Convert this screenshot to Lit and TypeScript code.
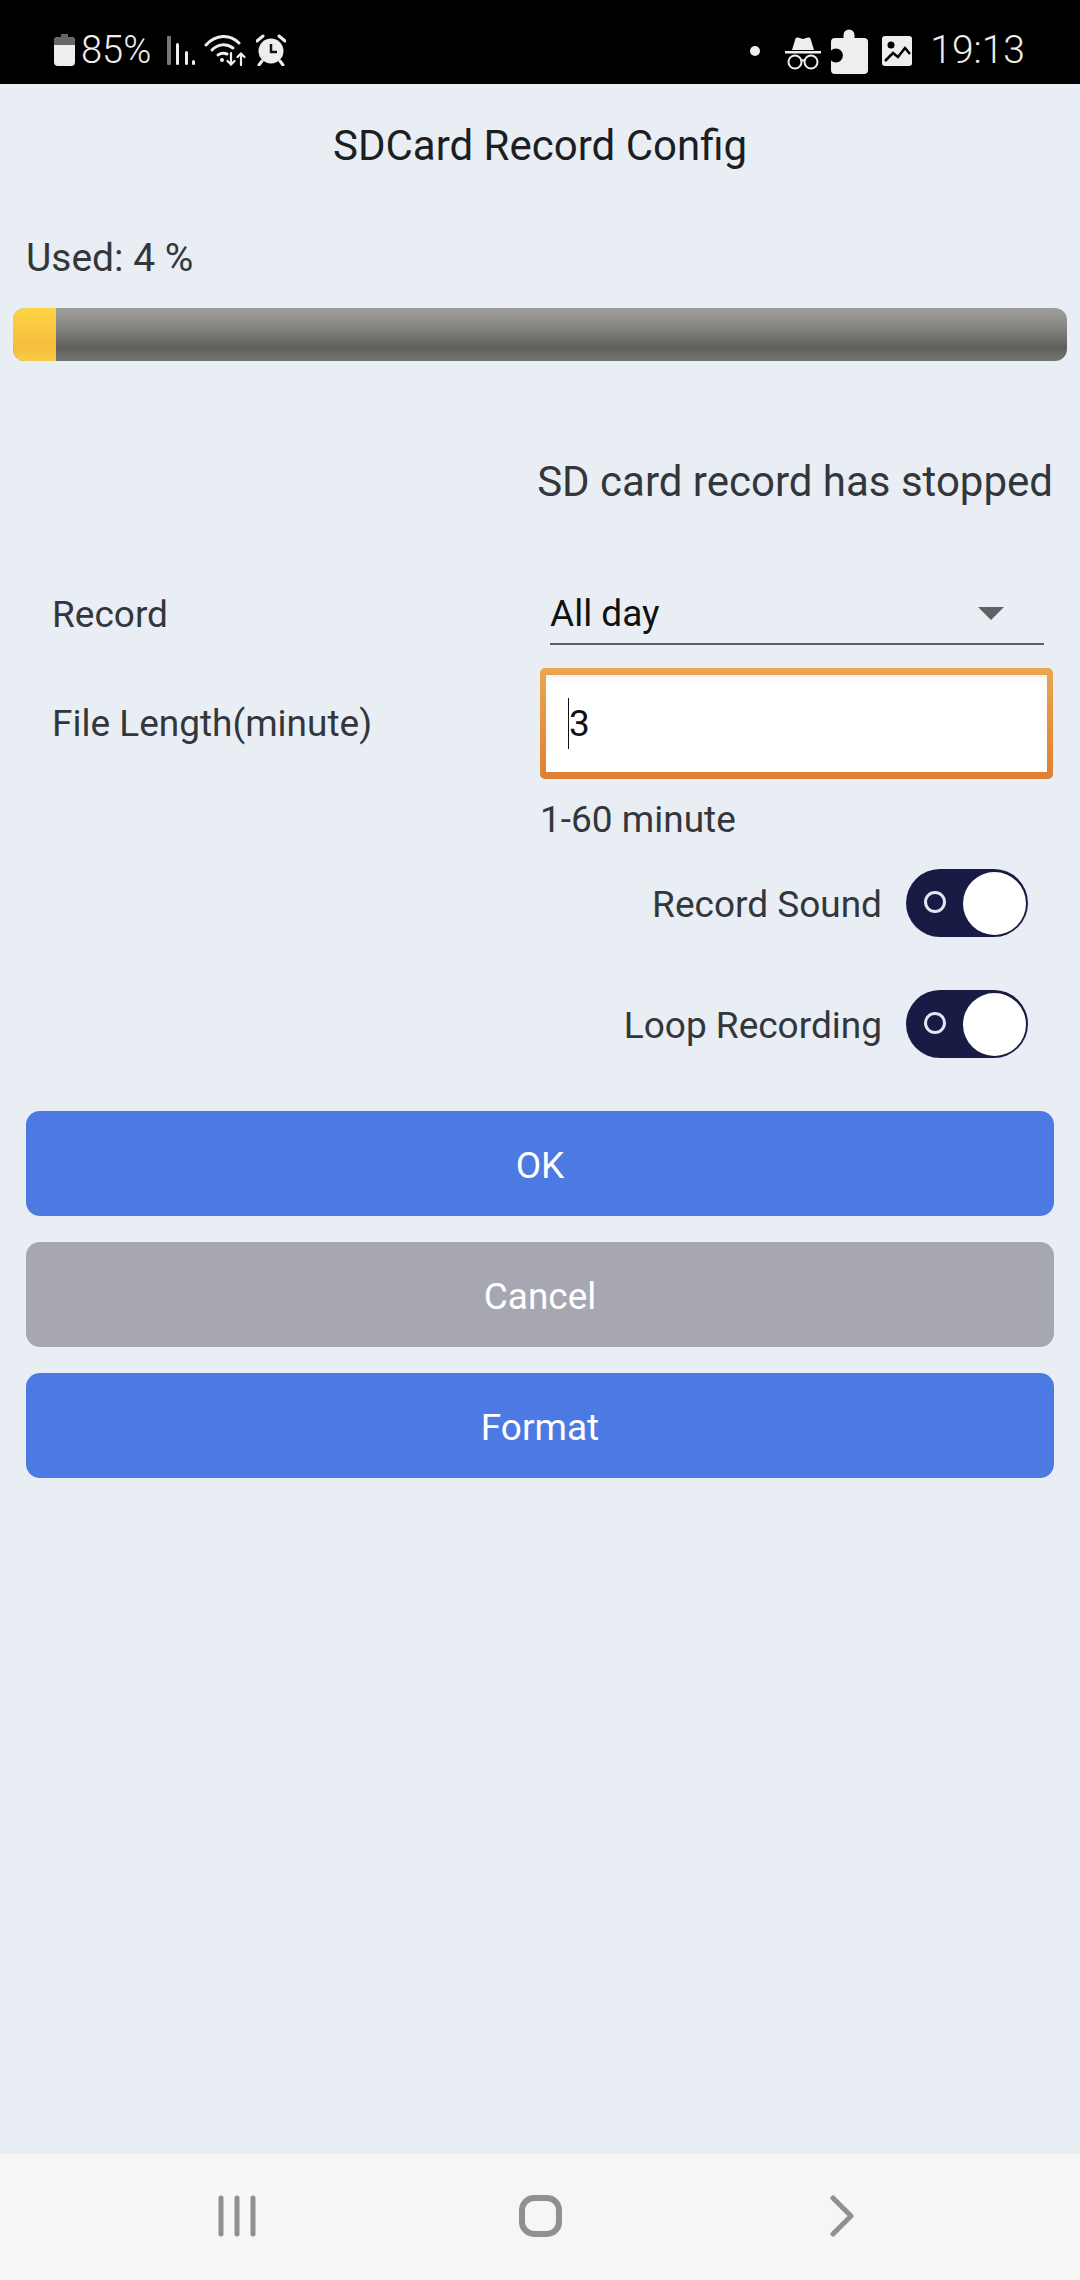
import { LitElement, html, css } from "lit";
import { customElement } from "lit/decorators.js";

@customElement("app-root")
export class AppRoot extends LitElement {
  static styles = css`
    :host { display: flex; flex-direction: column; width: 1080px; height: 2280px; background: #e9eef5; font-family: Roboto, "Liberation Sans", sans-serif; color: #33373b; overflow: hidden; }
    .status { height: 84px; box-sizing: border-box; background: #000; color: #eee; display: flex; align-items: center; padding: 16px 55px 0 54px; font-size: 38px; flex: none; }
    .status svg { display: block; flex: none; }
    .status .pct { margin-left: 6px; font-weight: 300; }
    .status .time { margin-left: 18px; font-size: 39px; font-weight: 300; }
    .status .spacer { flex: 1; }
    .main { flex: 1; display: flex; flex-direction: column; }
    .title { height: 122px; display: flex; align-items: center; justify-content: center; font-size: 42px; color: #1c1f22; flex: none; }
    .used { height: 102px; box-sizing: border-box; display: flex; align-items: center; padding: 2px 0 0 26px; font-size: 39px; flex: none; }
    .bar { height: 53px; margin: 0 13px; border-radius: 12px; overflow: hidden; background: linear-gradient(#a19f9e, #868684 35%, #5f605c 75%, #747470); flex: none; }
    .fill { height: 100%; width: 43px; background: linear-gradient(#fcd545, #f7bd3b 75%, #f9cb4a); }
    .state { margin-top: 90px; height: 60px; display: flex; align-items: center; justify-content: flex-end; padding-right: 27px; font-size: 42px; flex: none; }
    .form { margin-top: 78px; display: grid; grid-template-columns: 488px 513px; padding-left: 52px; font-size: 37px; row-gap: 23px; flex: none; }
    .lab { display: flex; align-items: center; }
    .lab.r1 { height: 56px; padding-bottom: 6px; box-sizing: border-box; }
    .select { height: 56px; margin: 0 9px 0 10px; box-sizing: border-box; border-bottom: 2px solid #5c6066; display: flex; align-items: center; justify-content: space-between; color: #111; padding: 0 40px 6px 0; }
    .arrow { width: 0; height: 0; border-left: 13px solid transparent; border-right: 13px solid transparent; border-top: 13px solid #5f6064; }
    .inputwrap { height: 111px; padding: 7px 6px; box-sizing: border-box; border-radius: 5px; background: linear-gradient(#eaa650, #df7f34); display: flex; }
    .input { flex: 1; background: #fff; box-shadow: inset 0 6px 8px -6px #ddd; display: flex; align-items: center; padding-left: 22px; color: #111; }
    .caret { width: 1px; height: 51px; background: #111; }
    .hint { height: 40px; margin-top: 20px; display: flex; align-items: center; font-size: 37px; flex: none; padding-left: 540px; }
    .switch { display: flex; align-items: center; justify-content: flex-end; padding-right: 52px; gap: 24px; height: 68px; font-size: 37px; flex: none; }
    .switch span { padding-top: 2px; }
    .sw1 { margin-top: 30px; }
    .sw2 { margin-top: 53px; }
    .toggle { width: 122px; height: 68px; box-sizing: border-box; border-radius: 34px; background: #181c45; display: flex; align-items: center; justify-content: space-between; padding: 0 2px 0 18px; }
    .ring { width: 22px; height: 22px; box-sizing: border-box; border: 3px solid #e4e6f0; border-radius: 50%; margin-top: -2px; }
    .knob { width: 63px; height: 63px; border-radius: 50%; background: #fff; }
    .btns { margin-top: 53px; padding: 0 26px; display: flex; flex-direction: column; gap: 26px; }
    .btn { height: 105px; box-sizing: border-box; padding-top: 3px; border-radius: 14px; background: #4d79e3; color: #fff; display: flex; align-items: center; justify-content: center; font-size: 37px; }
    .btn.gray { background: #a6a7b0; }
    .nav { height: 126px; background: #f6f6f6; display: flex; align-items: center; gap: 261px; padding: 0 0 2px 216px; box-sizing: border-box; flex: none; }
    .nav svg { display: block; }
    .nav .chev { margin-left: 6px; }
  `;

  private toggleRow(label: string, cls: string) {
    return html`<div class="switch ${cls}"><span>${label}</span><div class="toggle"><div class="ring"></div><div class="knob"></div></div></div>`;
  }

  render() {
    return html`
      <div class="status">
        <svg width="21" height="32" viewBox="0 0 21 32"><path d="M7 0h7v3h3a4 4 0 0 1 4 4v21a4 4 0 0 1-4 4H4a4 4 0 0 1-4-4V7a4 4 0 0 1 4-4h3z" fill="#eee"/><path d="M7 0h7v3h3a4 4 0 0 1 4 4v4H0V7a4 4 0 0 1 4-4h3z" fill="#666"/></svg>
        <span class="pct">85%</span>
        <svg style="margin-left:16px" width="30" height="32" viewBox="0 0 30 32"><rect x="0" y="2" width="4" height="29" rx="1" fill="#777"/><rect x="9" y="9" width="3" height="22" rx="1.5" fill="#eee"/><rect x="18" y="17" width="3" height="14" rx="1.5" fill="#eee"/><rect x="25" y="26" width="3" height="5" rx="1.5" fill="#eee"/></svg>
        <svg style="margin-left:7px" width="42" height="32" viewBox="0 0 42 32" fill="none" stroke="#eee" stroke-width="3" stroke-linecap="round"><path d="M2 11C12 0 26 0 35 9"/><path d="M8 16C14 10 22 9 29 14"/><path d="M14 21c3-2 6-2 9-1"/><circle cx="18" cy="26" r="2" fill="#eee" stroke="none"/><path d="M27 19v11M23.500 27l3.500 3.500 3.500-3.500" stroke-width="2.200"/><path d="M37 31V20M33.500 23l3.500-3.500 3.500 3.500" stroke-width="2.200"/></svg>
        <svg style="margin-left:10px" width="30" height="32" viewBox="0 0 30 32"><circle cx="15" cy="17" r="12.500" fill="#eee"/><path d="M15 10v8h6" fill="none" stroke="#111" stroke-width="2.500"/><path d="M1 7l6-5M29 7l-6-5M6 27l-3 4M24 27l3 4" fill="none" stroke="#eee" stroke-width="3" stroke-linecap="round"/></svg>
        <span class="spacer"></span>
        <svg width="10" height="10" viewBox="0 0 10 10" style="margin-top:2px"><circle cx="5" cy="5" r="5" fill="#eee"/></svg>
        <svg style="margin-left:25px;margin-top:6px" width="36" height="34" viewBox="0 0 36 34"><path d="M7 14L10.500 2.500Q11 1 13 1.500L18 3l5-1.500q2-.5 2.500 1L29 14z" fill="#eee"/><rect x="0" y="15" width="36" height="2.500" fill="#eee"/><g fill="none" stroke="#eee" stroke-width="2"><circle cx="10" cy="26" r="6.500"/><circle cx="26" cy="26" r="6.500"/><path d="M16 25q2-1.500 4 0"/></g></svg>
        <svg style="margin-left:10px;margin-top:2px" width="38" height="46" viewBox="0 0 38 46"><path d="M10 10h3.500V7a5.500 5.500 0 0 1 11 0v3H34a4 4 0 0 1 4 4v28a4 4 0 0 1-4 4H5a4 4 0 0 1-4-4V32.500a7 7 0 1 0 0-10V14a4 4 0 0 1 4-4z" transform="translate(-1 0)" fill="#eee"/></svg>
        <svg style="margin-left:13px;margin-top:2px" width="30" height="30" viewBox="0 0 30 30"><rect width="30" height="30" rx="3" fill="#eee"/><circle cx="9" cy="9" r="3.500" fill="#000"/><path d="M3 25l8-8 5 4 7-9 5 6" fill="none" stroke="#000" stroke-width="2.500"/><path d="M5.500 27L11 20.500l5 4 7-9 4 5V27z" fill="#eee"/></svg>
        <span class="time">19:13</span>
      </div>
      <div class="main">
        <div class="title">SDCard Record Config</div>
        <div class="used">Used: 4 %</div>
        <div class="bar"><div class="fill"></div></div>
        <div class="state">SD card record has stopped</div>
        <div class="form">
          <div class="lab r1">Record</div>
          <div class="select"><span>All day</span><span class="arrow"></span></div>
          <div class="lab">File Length(minute)</div>
          <div class="inputwrap"><div class="input"><span class="caret"></span><span>3</span></div></div>
        </div>
        <div class="hint">1-60 minute</div>
        ${this.toggleRow("Record Sound", "sw1")}
        ${this.toggleRow("Loop Recording", "sw2")}
        <div class="btns">
          <div class="btn">OK</div>
          <div class="btn gray">Cancel</div>
          <div class="btn">Format</div>
        </div>
      </div>
      <div class="nav">
        <svg width="42" height="42" viewBox="0 0 42 42" fill="none" stroke="#909090" stroke-width="5" stroke-linecap="round"><path d="M5 3v36M21 3v36M37 3v36"/></svg>
        <svg width="43" height="42" viewBox="0 0 43 42" fill="none" stroke="#909090" stroke-width="6"><rect x="3" y="3" width="37" height="36" rx="12"/></svg>
        <svg class="chev" width="26" height="42" viewBox="0 0 26 42" fill="none" stroke="#909090" stroke-width="5" stroke-linecap="round" stroke-linejoin="round"><path d="M4 3l18 18L4 39"/></svg>
      </div>
    `;
  }
}
